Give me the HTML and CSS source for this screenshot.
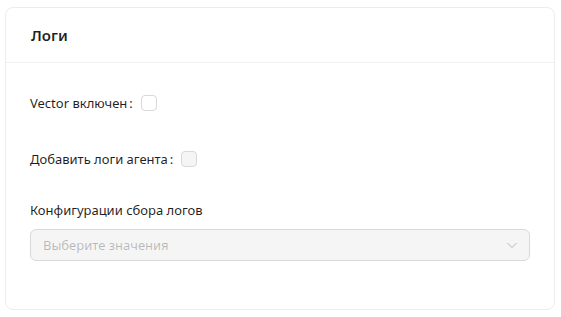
FILE: index.html
```html
<!DOCTYPE html>
<html lang="ru">
<head>
<meta charset="utf-8">
<link rel="stylesheet" href="styles.css">
</head>
<body>
<div class="card">
  <div class="card-head">Логи</div>
  <div class="card-body">
    <div class="form-item inline">
      <label class="label">Vector включен<span class="colon">:</span></label>
      <span class="checkbox"></span>
    </div>
    <div class="form-item inline">
      <label class="label">Добавить логи агента<span class="colon">:</span></label>
      <span class="checkbox disabled"></span>
    </div>
    <div class="form-item vertical">
      <label class="label">Конфигурации сбора логов</label>
      <div class="select">
        <span class="placeholder">Выберите значения</span>
        <svg class="arrow" width="12" height="12" viewBox="0 0 12 12"><path d="M1.5 4 L6 8.5 L10.5 4" fill="none" stroke="currentColor" stroke-width="1"/></svg>
      </div>
    </div>
  </div>
</div>
</body>
</html>
```

FILE: styles.css
```css
html, body { background: #fff; }
body {
  margin: 7px 6px 0 5px;
  font-family: "Noto Sans", "Open Sans", sans-serif;
  font-size: 13px;
  color: rgba(0,0,0,0.88);
}
.card {
  border: 1px solid #ececec;
  border-radius: 8px;
  background: #fff;
}
.card-head {
  height: 55px;
  box-sizing: border-box;
  padding: 0 25px;
  display: flex;
  align-items: center;
  font-size: 15px;
  font-weight: 600;
  border-bottom: 1px solid #f0f0f0;
}
.card-body {
  padding: 24px 24px 24px 24px;
}
.form-item {
  margin-bottom: 24px;
}
.form-item.inline {
  display: flex;
  align-items: center;
  height: 32px;
}
.label {
  line-height: 22px;
  display: inline-flex;
  align-items: center;
}
.colon {
  margin: 0 8px 0 2px;
}
.checkbox {
  width: 16px;
  height: 16px;
  box-sizing: border-box;
  border: 1px solid #d9d9d9;
  border-radius: 4px;
  background: #fff;
}
.checkbox.disabled {
  background: #f5f5f5;
}
.form-item.vertical {
  display: flex;
  flex-direction: column;
}
.form-item.vertical .label {
  padding-bottom: 8px;
}
.select {
  height: 32px;
  box-sizing: border-box;
  border: 1px solid #d9d9d9;
  border-radius: 6px;
  background: #f5f5f5;
  display: flex;
  align-items: center;
  justify-content: space-between;
  padding: 0 11px 0 12px;
}
.placeholder {
  color: rgba(0,0,0,0.25);
}
.arrow {
  color: rgba(0,0,0,0.25);
}
```
